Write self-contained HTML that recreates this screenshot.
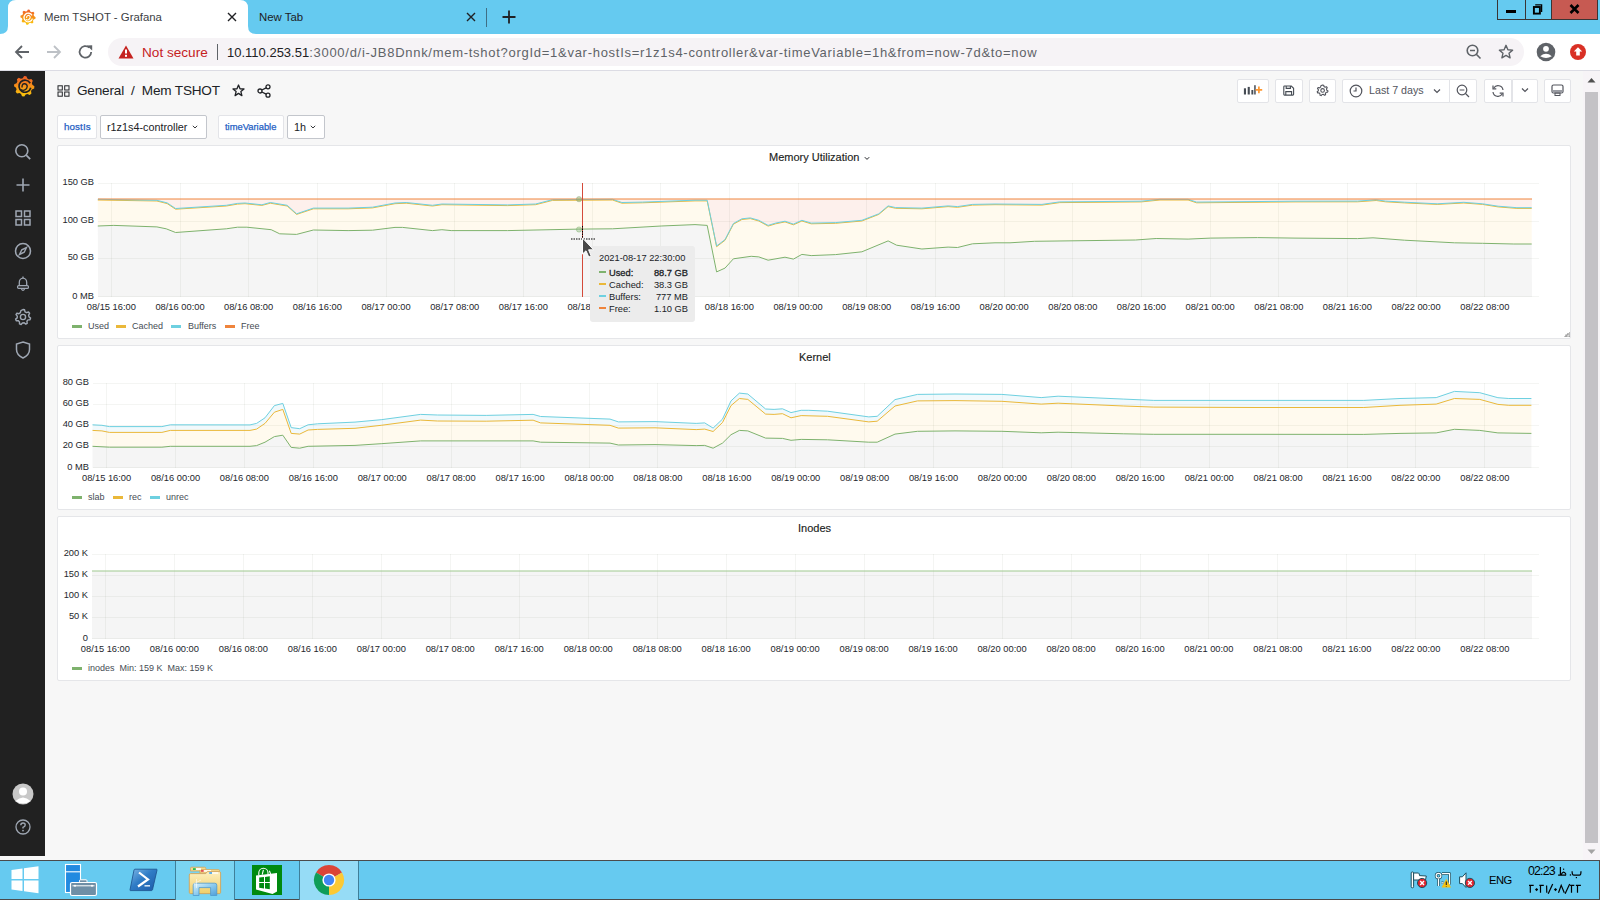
<!DOCTYPE html>
<html><head><meta charset="utf-8">
<style>
*{box-sizing:border-box;margin:0;padding:0}
html,body{width:1600px;height:900px;overflow:hidden;font-family:"Liberation Sans",sans-serif;background:#f7f7f7}
.a{position:absolute}
#tabs{left:0;top:0;width:1600px;height:34px;background:#65caf0}
#toolbar{left:0;top:34px;width:1600px;height:37px;background:#fff;border-bottom:1px solid #dcdce4}
#omni{left:108px;top:38px;width:1416px;height:28px;border-radius:14px;background:#f6f3f6}
#side{left:0;top:71px;width:45px;height:785px;background:#212121}
#main{left:45px;top:71px;width:1538px;height:789px;background:#f7f7f7}
#sbar{left:1583px;top:71px;width:17px;height:789px;background:#f7f4f7}
#thumb{left:1585px;top:92px;width:13px;height:751px;background:#c4c2c6}
#taskbar{left:0;top:860px;width:1600px;height:40px;background:#66caf0;border-top:1px solid #4b4b4b;border-bottom:1px solid #4b4b4b;border-right:1px solid #4b4b4b}
.panel{position:absolute;left:57px;width:1514px;background:#fff;border:1px solid #e5e6e9;border-radius:2px}
.ptitle{position:absolute;font-size:11px;color:#1b1d21;white-space:nowrap;-webkit-text-stroke:0.15px #1b1d21}
.btn{position:absolute;top:79px;height:24px;background:#fff;border:1px solid #e3e4e8;border-radius:2px}
.lg{position:absolute;font-size:9px;color:#464c54;white-space:nowrap}
.sw{position:absolute;width:10px;height:3px}
svg text{font-family:"Liberation Sans",sans-serif}
</style></head><body>

<!-- ============ Chrome tab strip ============ -->
<div id="tabs" class="a"></div>
<svg class="a" style="left:0;top:0" width="270" height="36">
  <path d="M0,34 Q8,34 8,26 L8,8 Q8,0 16,0 L240,0 Q248,0 248,8 L248,26 Q248,34 256,34 Z" fill="#fff"/>
</svg>
<!-- grafana favicon -->
<svg class="a" style="left:20px;top:9px" width="16" height="16" viewBox="0 0 16 16">
  <defs><linearGradient id="gf" x1="0" y1="0" x2="0" y2="1"><stop offset="0" stop-color="#f05a28"/><stop offset="1" stop-color="#fbca0a"/></linearGradient></defs>
  <path d="M6.91,2.20 L7.95,0.60 L9.61,0.77 L10.30,2.55 L11.48,3.19 L13.34,2.79 L14.39,4.09 L13.62,5.83 L14.00,7.11 L15.60,8.15 L15.43,9.81 L13.65,10.50 L13.01,11.68 L13.41,13.54 L12.11,14.59 L10.37,13.82 L9.09,14.20 L8.05,15.80 L6.39,15.63 L5.70,13.85 L4.52,13.21 L2.66,13.61 L1.61,12.31 L2.38,10.57 L2.00,9.29 L0.40,8.25 L0.57,6.59 L2.35,5.90 L2.99,4.72 L2.59,2.86 L3.89,1.81 L5.63,2.58 Z" fill="url(#gf)"/>
  <path d="M12,6.4 A4.3,4.3 0 1,0 12.4,9.6" fill="none" stroke="#fff" stroke-width="1.3"/>
  <path d="M6.8,9 A1.8,1.8 0 1,1 10.2,8.3 A2.8,2.8 0 0,1 5.8,10.4" fill="none" stroke="#fff" stroke-width="1.1"/>
</svg>
<div class="a" style="left:44px;top:11px;font-size:11.4px;color:#3c4043;white-space:nowrap">Mem TSHOT - Grafana</div>
<svg class="a" style="left:227px;top:12px" width="10" height="10"><path d="M1,1 L9,9 M9,1 L1,9" stroke="#202124" stroke-width="1.4"/></svg>
<div class="a" style="left:259px;top:11px;font-size:11.4px;color:#202124;white-space:nowrap">New Tab</div>
<svg class="a" style="left:466px;top:12px" width="10" height="10"><path d="M1,1 L9,9 M9,1 L1,9" stroke="#202124" stroke-width="1.4"/></svg>
<div class="a" style="left:486px;top:8px;width:1px;height:19px;background:#3f6f85"></div>
<svg class="a" style="left:502px;top:10px" width="14" height="14"><path d="M7,0.5 V13.5 M0.5,7 H13.5" stroke="#202124" stroke-width="1.8"/></svg>
<!-- window controls -->
<div class="a" style="left:1497px;top:0;width:101px;height:20px;border:1px solid #3a3434;border-top:none;background:#65caf0"></div>
<div class="a" style="left:1525px;top:0;width:1px;height:20px;background:#3a3434"></div>
<div class="a" style="left:1551px;top:0;width:46px;height:19px;background:#c75a52;border-left:1px solid #3a3434"></div>
<div class="a" style="left:1506px;top:10px;width:10px;height:3px;background:#000"></div>
<svg class="a" style="left:1532px;top:3px" width="12" height="12" viewBox="0 0 12 12"><path d="M3.2,1.8 H9.6 V9" fill="none" stroke="#000" stroke-width="1.3"/><rect x="1.9" y="4" width="6" height="6.6" fill="none" stroke="#000" stroke-width="1.9"/></svg>
<svg class="a" style="left:1569px;top:4px" width="11" height="10" viewBox="0 0 11 10"><path d="M1.5,1 L9.5,9 M9.5,1 L1.5,9" stroke="#000" stroke-width="2.6"/></svg>

<!-- ============ Chrome toolbar ============ -->
<div id="toolbar" class="a"></div>
<svg class="a" style="left:12px;top:44px" width="20" height="16" viewBox="0 0 20 16"><path d="M17,8 H4 M10,2 L4,8 L10,14" fill="none" stroke="#5f6368" stroke-width="1.8"/></svg>
<svg class="a" style="left:44px;top:44px" width="20" height="16" viewBox="0 0 20 16"><path d="M3,8 H16 M10,2 L16,8 L10,14" fill="none" stroke="#bdc1c6" stroke-width="1.8"/></svg>
<svg class="a" style="left:77px;top:43px" width="18" height="18" viewBox="0 0 18 18"><path d="M14.2,9 A5.8,5.8 0 1,1 12.3,4.6" fill="none" stroke="#5f6368" stroke-width="1.8"/><path d="M9.8,2.4 L15.2,2.2 L15.2,7.4 Z" fill="#5f6368"/></svg>
<div id="omni" class="a"></div>
<svg class="a" style="left:118px;top:45px" width="16" height="14" viewBox="0 0 16 14"><path d="M8,0.5 L15.5,13.5 H0.5 Z" fill="#c5221f"/><rect x="7" y="4.5" width="2" height="4" fill="#fff"/><rect x="7" y="9.8" width="2" height="2" fill="#fff"/></svg>
<div class="a" style="left:142px;top:45px;font-size:13.6px;color:#c5221f;white-space:nowrap">Not secure</div>
<div class="a" style="left:217px;top:44px;width:1px;height:16px;background:#5f6368"></div>
<div class="a" style="left:227px;top:45px;font-size:13px;color:#5f6368;white-space:nowrap"><span style="color:#202124">10.110.253.51</span><span style="letter-spacing:0.72px">:3000/d/i-JB8Dnnk/mem-tshot?orgId=1&amp;var-hostIs=r1z1s4-controller&amp;var-timeVariable=1h&amp;from=now-7d&amp;to=now</span></div>
<svg class="a" style="left:1465px;top:43px" width="17" height="17" viewBox="0 0 17 17"><circle cx="7.5" cy="7.5" r="5.3" fill="none" stroke="#5f6368" stroke-width="1.6"/><path d="M5,7.5 H10 M11.3,11.3 L15.5,15.5" stroke="#5f6368" stroke-width="1.6"/></svg>
<svg class="a" style="left:1498px;top:44px" width="16" height="16" viewBox="0 0 16 16"><path d="M8,1.3 L9.9,5.7 L14.6,6.1 L11,9.2 L12.1,13.8 L8,11.4 L3.9,13.8 L5,9.2 L1.4,6.1 L6.1,5.7 Z" fill="none" stroke="#5f6368" stroke-width="1.4" stroke-linejoin="round"/></svg>
<svg class="a" style="left:1536px;top:42px" width="20" height="20" viewBox="0 0 20 20"><circle cx="10" cy="10" r="9.3" fill="#5f6368"/><circle cx="10" cy="6.8" r="2.9" fill="#fff"/><path d="M4.2,14.2 Q10,9.5 15.8,14.2 Q10,17.8 4.2,14.2 Z" fill="#fff"/></svg>
<svg class="a" style="left:1570px;top:44px" width="16" height="16" viewBox="0 0 16 16"><circle cx="8" cy="8" r="8" fill="#d93025"/><path d="M8,3.2 L12.2,7.6 H9.8 V11.6 H6.2 V7.6 H3.8 Z" fill="#fff"/></svg>

<!-- ============ Grafana ============ -->
<div id="main" class="a"></div>
<div id="side" class="a"></div>
<!-- grafana logo -->
<svg class="a" style="left:11px;top:73px" width="24" height="25" viewBox="0 0 24 25">
  <defs><linearGradient id="gl" x1="0" y1="0" x2="0" y2="1"><stop offset="0" stop-color="#f05a28"/><stop offset="1" stop-color="#fbca0a"/></linearGradient></defs>
  <path d="M11.72,5.13 L13.13,3.10 L15.36,3.33 L16.33,5.61 L17.93,6.48 L20.37,6.04 L21.78,7.78 L20.85,10.07 L21.37,11.82 L23.40,13.23 L23.17,15.46 L20.89,16.43 L20.02,18.03 L20.46,20.47 L18.72,21.88 L16.43,20.95 L14.68,21.47 L13.27,23.50 L11.04,23.27 L10.07,20.99 L8.47,20.12 L6.03,20.56 L4.62,18.82 L5.55,16.53 L5.03,14.78 L3.00,13.37 L3.23,11.14 L5.51,10.17 L6.38,8.57 L5.94,6.13 L7.68,4.72 L9.97,5.65 Z" fill="url(#gl)"/>
  <path d="M19.2,10.2 A6,6 0 1,0 19.8,14.8" fill="none" stroke="#212121" stroke-width="1.7"/>
  <path d="M11.3,14.5 A2.6,2.6 0 1,1 16.2,13.5 A4,4 0 0,1 9.8,16.5" fill="none" stroke="#212121" stroke-width="1.4"/>
</svg>
<!-- side icons -->
<svg class="a" style="left:14px;top:143px" width="18" height="18" viewBox="0 0 18 18"><circle cx="7.8" cy="7.8" r="6" fill="none" stroke="#9fa7b3" stroke-width="1.6"/><path d="M12.2,12.2 L16.2,16.2" stroke="#9fa7b3" stroke-width="1.8"/></svg>
<svg class="a" style="left:16px;top:178px" width="14" height="14" viewBox="0 0 14 14"><path d="M7,0.5 V13.5 M0.5,7 H13.5" stroke="#9fa7b3" stroke-width="1.6"/></svg>
<svg class="a" style="left:15px;top:210px" width="16" height="16" viewBox="0 0 16 16"><g fill="none" stroke="#9fa7b3" stroke-width="1.5"><rect x="1" y="1" width="5.5" height="5.5"/><rect x="9.5" y="1" width="5.5" height="5.5"/><rect x="1" y="9.5" width="5.5" height="5.5"/><rect x="9.5" y="9.5" width="5.5" height="5.5"/></g></svg>
<svg class="a" style="left:14px;top:242px" width="18" height="18" viewBox="0 0 18 18"><circle cx="9" cy="9" r="7.5" fill="none" stroke="#9fa7b3" stroke-width="1.5"/><path d="M12.5,5.5 L10.2,10.2 L5.5,12.5 L7.8,7.8 Z" fill="none" stroke="#9fa7b3" stroke-width="1.4"/></svg>
<svg class="a" style="left:15px;top:275px" width="16" height="18" viewBox="0 0 16 18"><path d="M4.3,10.4 V7.6 A3.7,4.4 0 0,1 11.7,7.6 V10.4" fill="none" stroke="#9fa7b3" stroke-width="1.3"/><rect x="2.6" y="10.6" width="10.8" height="2.8" rx="1" fill="none" stroke="#9fa7b3" stroke-width="1.2"/><path d="M6.4,14.2 Q8,16.4 9.6,14.2" fill="none" stroke="#9fa7b3" stroke-width="1.2"/><path d="M8,1.6 V3.3" stroke="#9fa7b3" stroke-width="1.3"/></svg>
<svg class="a" style="left:14px;top:308px" width="18" height="18" viewBox="0 0 18 18"><path d="M9,1.5 L10.6,1.8 L11,3.8 L12.6,4.7 L14.5,4 L15.6,5.3 L14.6,7.1 L15,8.9 L16.6,10.1 L16,11.7 L14,11.9 L12.9,13.3 L13.2,15.3 L11.7,16.1 L10.2,14.8 L8.4,15 L7.1,16.5 L5.5,15.9 L5.5,13.9 L4.2,12.6 L2.2,12.7 L1.6,11.1 L3.2,9.9 L3.3,8.1 L2,6.6 L2.9,5.2 L4.9,5.7 L6.4,4.6 L6.9,2.6 Z" fill="none" stroke="#9fa7b3" stroke-width="1.4" stroke-linejoin="round"/><circle cx="9" cy="9" r="2.6" fill="none" stroke="#9fa7b3" stroke-width="1.4"/></svg>
<svg class="a" style="left:15px;top:341px" width="16" height="18" viewBox="0 0 16 18"><path d="M8,1 L14.5,3 V8.5 Q14.5,14 8,17 Q1.5,14 1.5,8.5 V3 Z" fill="none" stroke="#9fa7b3" stroke-width="1.5"/></svg>
<svg class="a" style="left:12px;top:783px" width="22" height="22" viewBox="0 0 22 22"><circle cx="11" cy="11" r="10.5" fill="#c8c8c8"/><circle cx="11" cy="8.5" r="4" fill="#fff"/><path d="M3.5,18 Q11,11 18.5,18 Q11,23 3.5,18 Z" fill="#fff"/></svg>
<svg class="a" style="left:15px;top:819px" width="16" height="16" viewBox="0 0 16 16"><circle cx="8" cy="8" r="7" fill="none" stroke="#9fa7b3" stroke-width="1.3"/><path d="M5.8,6.2 Q5.8,4 8,4 Q10.2,4 10.2,6 Q10.2,7.4 8,8.3 V9.6" fill="none" stroke="#9fa7b3" stroke-width="1.4"/><circle cx="8" cy="11.6" r="0.9" fill="#9fa7b3"/></svg>

<!-- header -->
<svg class="a" style="left:57px;top:85px" width="13" height="12" viewBox="0 0 13 12"><g fill="none" stroke="#202226" stroke-width="1"><rect x="1" y="0.8" width="4.3" height="4.2"/><rect x="7.7" y="0.8" width="4.3" height="4.2"/><rect x="1" y="7" width="4.3" height="4.2"/><rect x="7.7" y="7" width="4.3" height="4.2"/></g></svg>
<div class="a" style="left:77px;top:83px;font-size:13.6px;color:#202226;white-space:nowrap;letter-spacing:-0.2px">General&nbsp;&nbsp;/&nbsp;&nbsp;Mem TSHOT</div>
<svg class="a" style="left:232px;top:84px" width="13" height="13" viewBox="0 0 13 13"><path d="M6.5,1 L8,4.8 L12,5 L8.9,7.6 L9.9,11.6 L6.5,9.4 L3.1,11.6 L4.1,7.6 L1,5 L5,4.8 Z" fill="none" stroke="#202226" stroke-width="1.3" stroke-linejoin="round"/></svg>
<svg class="a" style="left:257px;top:84px" width="14" height="14" viewBox="0 0 14 14"><g fill="none" stroke="#202226" stroke-width="1.3"><circle cx="3" cy="7" r="2"/><circle cx="11" cy="2.8" r="2"/><circle cx="11" cy="11.2" r="2"/><path d="M4.8,6 L9.2,3.8 M4.8,8 L9.2,10.2"/></g></svg>

<!-- right toolbar buttons -->
<div class="btn" style="left:1237px;width:32px"></div>
<svg class="a" style="left:1243px;top:84px" width="20" height="12" viewBox="0 0 20 12"><g fill="#464c54"><rect x="0.9" y="4.3" width="2.1" height="6.2"/><rect x="4.7" y="2.9" width="2.1" height="7.6"/><rect x="8.4" y="6" width="1.9" height="4.5"/><rect x="11.2" y="1.2" width="1.5" height="9.3"/></g><path d="M15.9,2.6 V9.2 M12.6,5.9 H19.2" stroke="#ff9830" stroke-width="1.7"/></svg>
<div class="btn" style="left:1275px;width:28px"></div>
<svg class="a" style="left:1283px;top:85px" width="12" height="11" viewBox="0 0 12 11"><path d="M1.5,1 H8.3 L10.6,3.3 V9.3 Q10.6,10.1 9.8,10.1 H1.5 Q0.8,10.1 0.8,9.3 V1.8 Q0.8,1 1.5,1 Z" fill="none" stroke="#464c54" stroke-width="1.1"/><path d="M3.2,1 V3.4 H7.4 V1 M2.8,10.1 V6.6 H8.6 V10.1" fill="none" stroke="#464c54" stroke-width="1.1"/></svg>
<div class="btn" style="left:1309px;width:27px"></div>
<svg class="a" style="left:1316px;top:84px" width="13" height="13" viewBox="0 0 13 13"><path d="M6.5,1 L7.7,1.2 L8,2.6 L9.1,3.2 L10.4,2.7 L11.2,3.7 L10.5,4.9 L10.8,6.2 L12,7 L11.6,8.2 L10.2,8.3 L9.4,9.3 L9.6,10.7 L8.5,11.3 L7.4,10.4 L6.1,10.5 L5.2,11.6 L4,11.2 L4,9.8 L3.1,8.9 L1.7,9 L1.2,7.8 L2.3,6.9 L2.4,5.6 L1.5,4.6 L2.1,3.5 L3.5,3.9 L4.6,3.1 L4.9,1.7 Z" fill="none" stroke="#52545c" stroke-width="1.1" stroke-linejoin="round"/><circle cx="6.6" cy="6.4" r="1.8" fill="none" stroke="#52545c" stroke-width="1.1"/></svg>
<div class="btn" style="left:1342px;width:108px;border-radius:2px 0 0 2px"></div>
<div class="btn" style="left:1449px;width:28px;border-radius:0 2px 2px 0"></div>
<svg class="a" style="left:1349px;top:84px" width="14" height="14" viewBox="0 0 14 14"><circle cx="7" cy="7" r="5.8" fill="none" stroke="#52545c" stroke-width="1.2"/><path d="M7,3.5 V7 H4.5" fill="none" stroke="#52545c" stroke-width="1.2"/></svg>
<div class="a" style="left:1369px;top:84px;font-size:10.7px;color:#52545c;white-space:nowrap">Last 7 days</div>
<svg class="a" style="left:1433px;top:88px" width="8" height="6" viewBox="0 0 8 6"><path d="M1,1.5 L4,4.5 L7,1.5" fill="none" stroke="#52545c" stroke-width="1.2"/></svg>
<svg class="a" style="left:1456px;top:84px" width="14" height="14" viewBox="0 0 14 14"><circle cx="6" cy="6" r="4.8" fill="none" stroke="#52545c" stroke-width="1.2"/><path d="M3.6,6 H8.4 M9.5,9.5 L13,13" stroke="#52545c" stroke-width="1.2"/></svg>
<div class="btn" style="left:1484px;width:28px;border-radius:2px 0 0 2px"></div>
<div class="btn" style="left:1512px;width:26px;border-radius:0 2px 2px 0"></div>
<svg class="a" style="left:1491px;top:84px" width="14" height="14" viewBox="0 0 14 14"><path d="M12,6 A5,5 0 0,0 2.8,4 M2,8 A5,5 0 0,0 11.2,10" fill="none" stroke="#52545c" stroke-width="1.2"/><path d="M2,1.5 V4.8 H5.3 M12,12.5 V9.2 H8.7" fill="none" stroke="#52545c" stroke-width="1.2"/></svg>
<svg class="a" style="left:1521px;top:87px" width="8" height="6" viewBox="0 0 8 6"><path d="M1,1.5 L4,4.5 L7,1.5" fill="none" stroke="#52545c" stroke-width="1.2"/></svg>
<div class="btn" style="left:1544px;width:27px"></div>
<svg class="a" style="left:1551px;top:84px" width="13" height="13" viewBox="0 0 13 13"><rect x="1" y="1" width="11" height="8" rx="1.5" fill="none" stroke="#52545c" stroke-width="1.2"/><rect x="1.6" y="6" width="9.8" height="2.4" fill="#9a9ca3"/><rect x="4" y="9" width="5" height="2.5" fill="none" stroke="#52545c" stroke-width="1"/></svg>

<!-- variables -->
<div class="a" style="left:57px;top:115px;width:40px;height:24px;background:#fff;border:1px solid #e3e4e8;border-radius:2px"></div>
<div class="a" style="left:64px;top:121px;font-size:9.8px;color:#1f60c4;white-space:nowrap;-webkit-text-stroke:0.25px #1f60c4;letter-spacing:0.1px">hostIs</div>
<div class="a" style="left:100px;top:115px;width:107px;height:24px;background:#fff;border:1px solid #c3c6cc;border-radius:2px"></div>
<div class="a" style="left:107px;top:121px;font-size:10.8px;color:#202226;white-space:nowrap">r1z1s4-controller</div>
<svg class="a" style="left:192px;top:125px" width="6" height="4" viewBox="0 0 6 4"><path d="M0.8,0.8 L3,3 L5.2,0.8" fill="none" stroke="#202226" stroke-width="0.9"/></svg>
<div class="a" style="left:218px;top:115px;width:66px;height:24px;background:#fff;border:1px solid #e3e4e8;border-radius:2px"></div>
<div class="a" style="left:225px;top:121px;font-size:9.4px;color:#1f60c4;white-space:nowrap;-webkit-text-stroke:0.25px #1f60c4">timeVariable</div>
<div class="a" style="left:287px;top:115px;width:38px;height:24px;background:#fff;border:1px solid #c3c6cc;border-radius:2px"></div>
<div class="a" style="left:294px;top:121px;font-size:10.8px;color:#202226;white-space:nowrap">1h</div>
<svg class="a" style="left:310px;top:125px" width="6" height="4" viewBox="0 0 6 4"><path d="M0.8,0.8 L3,3 L5.2,0.8" fill="none" stroke="#202226" stroke-width="0.9"/></svg>

<!-- panels -->
<div class="panel" style="top:145px;height:194px"></div>
<div class="panel" style="top:345px;height:165px"></div>
<div class="panel" style="top:516px;height:165px"></div>
<svg class="a" style="left:1564px;top:332px" width="6" height="5"><path d="M0,5 H6 V0 M2,5 V3 H4 V1" fill="none" stroke="#8e8e8e" stroke-width="1.2"/></svg>
<div class="ptitle" style="left:769px;top:151px">Memory Utilization</div>
<svg class="a" style="left:864px;top:156px" width="6" height="5" viewBox="0 0 6 5"><path d="M0.8,1.2 L3,3.4 L5.2,1.2" fill="none" stroke="#202226" stroke-width="1"/></svg>
<div class="ptitle" style="left:799px;top:351px">Kernel</div>
<div class="ptitle" style="left:798px;top:522px">Inodes</div>

<svg class="a" style="left:0;top:0" width="1600" height="900">

<polygon fill="#f5f5f5" points="97.8,226.0 113.8,225.4 156.9,226.9 166.2,228.8 175.6,232.5 226.3,228.8 237.5,227.2 246.9,227.2 271.2,229.7 279.7,233.8 296.6,234.4 313.4,230.0 348.1,230.6 372.5,230.2 395.0,227.4 402.5,227.4 432.5,230.6 441.9,229.7 451.2,230.6 507.5,230.6 578.8,229.1 612.5,228.8 661.2,226.0 695.0,224.6 707.2,225.4 716.6,271.9 725.0,268.1 733.4,258.8 751.2,256.3 758.8,256.9 768.1,260.2 785.0,257.2 793.4,259.1 801.9,254.4 811.2,255.6 835.6,254.6 861.9,251.8 888.1,240.9 896.6,245.2 921.9,249.0 948.1,247.1 957.5,247.5 972.5,243.8 995.0,242.8 1010.0,242.8 1034.4,241.3 1135.6,240.0 1156.2,238.5 1188.1,239.1 1210.6,238.1 1257.5,237.6 1295.0,238.1 1357.5,238.6 1373.0,237.8 1404.4,240.2 1454.4,242.8 1482.5,243.3 1513.8,244.0 1531.7,244.0 1532.0,297.0 98.0,297.0"/>
<polygon fill="#fffaee" points="97.8,199.3 156.9,200.3 167.2,202.9 175.6,208.5 226.3,205.3 237.5,203.4 245.0,203.0 261.9,204.8 270.3,202.5 287.2,205.3 296.6,213.8 313.4,208.1 348.1,208.1 372.5,207.2 395.0,203.0 406.2,202.5 432.5,205.3 441.9,204.0 507.5,204.9 535.6,204.0 552.5,199.7 612.5,199.3 621.9,202.5 642.5,202.1 695.0,200.2 707.2,200.2 716.6,246.0 725.0,239.6 733.4,223.5 741.9,218.8 750.3,217.9 758.8,220.3 768.1,225.4 775.6,223.1 785.0,221.2 793.4,224.1 801.9,220.3 811.2,223.1 835.6,222.6 861.9,220.3 878.8,213.8 888.1,205.9 895.6,207.6 921.9,208.1 948.1,205.9 957.5,206.6 972.5,204.4 995.0,204.0 1041.9,204.4 1059.7,201.9 1141.2,201.2 1160.0,199.3 1188.1,199.3 1196.6,202.1 1295.0,201.2 1357.5,201.1 1376.2,199.8 1385.6,201.1 1404.4,202.2 1437.2,203.8 1463.8,202.3 1482.5,203.8 1498.1,206.2 1516.9,207.7 1531.7,207.7 1531.7,244.0 1513.8,244.0 1482.5,243.3 1454.4,242.8 1404.4,240.2 1373.0,237.8 1357.5,238.6 1295.0,238.1 1257.5,237.6 1210.6,238.1 1188.1,239.1 1156.2,238.5 1135.6,240.0 1034.4,241.3 1010.0,242.8 995.0,242.8 972.5,243.8 957.5,247.5 948.1,247.1 921.9,249.0 896.6,245.2 888.1,240.9 861.9,251.8 835.6,254.6 811.2,255.6 801.9,254.4 793.4,259.1 785.0,257.2 768.1,260.2 758.8,256.9 751.2,256.3 733.4,258.8 725.0,268.1 716.6,271.9 707.2,225.4 695.0,224.6 661.2,226.0 612.5,228.8 578.8,229.1 507.5,230.6 451.2,230.6 441.9,229.7 432.5,230.6 402.5,227.4 395.0,227.4 372.5,230.2 348.1,230.6 313.4,230.0 296.6,234.4 279.7,233.8 271.2,229.7 246.9,227.2 237.5,227.2 226.3,228.8 175.6,232.5 166.2,228.8 156.9,226.9 113.8,225.4 97.8,226.0"/>
<polygon fill="#fdf0ec" points="98.0,199.0 1532.0,199.0 1531.7,207.7 1516.9,207.7 1498.1,206.2 1482.5,203.8 1463.8,202.3 1437.2,203.8 1404.4,202.2 1385.6,201.1 1376.2,199.8 1357.5,201.1 1295.0,201.2 1196.6,202.1 1188.1,199.3 1160.0,199.3 1141.2,201.2 1059.7,201.9 1041.9,204.4 995.0,204.0 972.5,204.4 957.5,206.6 948.1,205.9 921.9,208.1 895.6,207.6 888.1,205.9 878.8,213.8 861.9,220.3 835.6,222.6 811.2,223.1 801.9,220.3 793.4,224.1 785.0,221.2 775.6,223.1 768.1,225.4 758.8,220.3 750.3,217.9 741.9,218.8 733.4,223.5 725.0,239.6 716.6,246.0 707.2,200.2 695.0,200.2 642.5,202.1 621.9,202.5 612.5,199.3 552.5,199.7 535.6,204.0 507.5,204.9 441.9,204.0 432.5,205.3 406.2,202.5 395.0,203.0 372.5,207.2 348.1,208.1 313.4,208.1 296.6,213.8 287.2,205.3 270.3,202.5 261.9,204.8 245.0,203.0 237.5,203.4 226.3,205.3 175.6,208.5 167.2,202.9 156.9,200.3 97.8,199.3"/>
<g stroke="rgba(40,50,20,0.05)" stroke-width="1" shape-rendering="crispEdges">
<line x1="111.3" y1="183" x2="111.3" y2="297"/>
<line x1="180.0" y1="183" x2="180.0" y2="297"/>
<line x1="248.6" y1="183" x2="248.6" y2="297"/>
<line x1="317.3" y1="183" x2="317.3" y2="297"/>
<line x1="386.0" y1="183" x2="386.0" y2="297"/>
<line x1="454.7" y1="183" x2="454.7" y2="297"/>
<line x1="523.3" y1="183" x2="523.3" y2="297"/>
<line x1="592.0" y1="183" x2="592.0" y2="297"/>
<line x1="660.7" y1="183" x2="660.7" y2="297"/>
<line x1="729.4" y1="183" x2="729.4" y2="297"/>
<line x1="798.0" y1="183" x2="798.0" y2="297"/>
<line x1="866.7" y1="183" x2="866.7" y2="297"/>
<line x1="935.4" y1="183" x2="935.4" y2="297"/>
<line x1="1004.1" y1="183" x2="1004.1" y2="297"/>
<line x1="1072.8" y1="183" x2="1072.8" y2="297"/>
<line x1="1141.4" y1="183" x2="1141.4" y2="297"/>
<line x1="1210.1" y1="183" x2="1210.1" y2="297"/>
<line x1="1278.8" y1="183" x2="1278.8" y2="297"/>
<line x1="1347.4" y1="183" x2="1347.4" y2="297"/>
<line x1="1416.1" y1="183" x2="1416.1" y2="297"/>
<line x1="1484.8" y1="183" x2="1484.8" y2="297"/>
<line x1="98" y1="183.5" x2="1539" y2="183.5"/>
<line x1="98" y1="221.5" x2="1539" y2="221.5"/>
<line x1="98" y1="258.5" x2="1539" y2="258.5"/>
<line x1="98" y1="296.5" x2="1539" y2="296.5"/>
</g>
<polyline fill="none" stroke="#7eb26d" stroke-width="1" points="97.8,226.0 113.8,225.4 156.9,226.9 166.2,228.8 175.6,232.5 226.3,228.8 237.5,227.2 246.9,227.2 271.2,229.7 279.7,233.8 296.6,234.4 313.4,230.0 348.1,230.6 372.5,230.2 395.0,227.4 402.5,227.4 432.5,230.6 441.9,229.7 451.2,230.6 507.5,230.6 578.8,229.1 612.5,228.8 661.2,226.0 695.0,224.6 707.2,225.4 716.6,271.9 725.0,268.1 733.4,258.8 751.2,256.3 758.8,256.9 768.1,260.2 785.0,257.2 793.4,259.1 801.9,254.4 811.2,255.6 835.6,254.6 861.9,251.8 888.1,240.9 896.6,245.2 921.9,249.0 948.1,247.1 957.5,247.5 972.5,243.8 995.0,242.8 1010.0,242.8 1034.4,241.3 1135.6,240.0 1156.2,238.5 1188.1,239.1 1210.6,238.1 1257.5,237.6 1295.0,238.1 1357.5,238.6 1373.0,237.8 1404.4,240.2 1454.4,242.8 1482.5,243.3 1513.8,244.0 1531.7,244.0"/>
<polyline fill="none" stroke="#eab839" stroke-width="1" points="97.8,200.0 156.9,201.0 167.2,203.6 175.6,209.2 226.3,206.0 237.5,204.1 245.0,203.7 261.9,205.4 270.3,203.2 287.2,206.0 296.6,214.4 313.4,208.8 348.1,208.8 372.5,207.9 395.0,203.7 406.2,203.2 432.5,206.0 441.9,204.7 507.5,205.6 535.6,204.7 552.5,200.4 612.5,200.0 621.9,203.2 642.5,202.8 695.0,200.9 707.2,200.9 716.6,246.7 725.0,240.3 733.4,224.2 741.9,219.5 750.3,218.6 758.8,221.0 768.1,226.1 775.6,223.8 785.0,221.9 793.4,224.8 801.9,221.0 811.2,223.8 835.6,223.3 861.9,221.0 878.8,214.4 888.1,206.6 895.6,208.3 921.9,208.8 948.1,206.6 957.5,207.3 972.5,205.1 995.0,204.7 1041.9,205.1 1059.7,202.6 1141.2,201.9 1160.0,200.0 1188.1,200.0 1196.6,202.8 1295.0,201.9 1357.5,201.8 1376.2,200.5 1385.6,201.8 1404.4,202.9 1437.2,204.4 1463.8,203.0 1482.5,204.4 1498.1,206.9 1516.9,208.4 1531.7,208.4"/>
<polyline fill="none" stroke="#6ed0e0" stroke-width="1" points="97.8,199.3 156.9,200.3 167.2,202.9 175.6,208.5 226.3,205.3 237.5,203.4 245.0,203.0 261.9,204.8 270.3,202.5 287.2,205.3 296.6,213.8 313.4,208.1 348.1,208.1 372.5,207.2 395.0,203.0 406.2,202.5 432.5,205.3 441.9,204.0 507.5,204.9 535.6,204.0 552.5,199.7 612.5,199.3 621.9,202.5 642.5,202.1 695.0,200.2 707.2,200.2 716.6,246.0 725.0,239.6 733.4,223.5 741.9,218.8 750.3,217.9 758.8,220.3 768.1,225.4 775.6,223.1 785.0,221.2 793.4,224.1 801.9,220.3 811.2,223.1 835.6,222.6 861.9,220.3 878.8,213.8 888.1,205.9 895.6,207.6 921.9,208.1 948.1,205.9 957.5,206.6 972.5,204.4 995.0,204.0 1041.9,204.4 1059.7,201.9 1141.2,201.2 1160.0,199.3 1188.1,199.3 1196.6,202.1 1295.0,201.2 1357.5,201.1 1376.2,199.8 1385.6,201.1 1404.4,202.2 1437.2,203.8 1463.8,202.3 1482.5,203.8 1498.1,206.2 1516.9,207.7 1531.7,207.7"/>
<polyline fill="none" stroke="#ef843c" stroke-width="1" points="98.0,199.0 1532.0,199.0"/>
<g fill="#24262b" font-size="9.3">
<text x="94" y="184.8" text-anchor="end">150 GB</text>
<text x="94" y="222.5" text-anchor="end">100 GB</text>
<text x="94" y="260.3" text-anchor="end">50 GB</text>
<text x="94" y="298.8" text-anchor="end">0 MB</text>
<text x="111.3" y="309.5" text-anchor="middle">08/15 16:00</text>
<text x="180.0" y="309.5" text-anchor="middle">08/16 00:00</text>
<text x="248.6" y="309.5" text-anchor="middle">08/16 08:00</text>
<text x="317.3" y="309.5" text-anchor="middle">08/16 16:00</text>
<text x="386.0" y="309.5" text-anchor="middle">08/17 00:00</text>
<text x="454.7" y="309.5" text-anchor="middle">08/17 08:00</text>
<text x="523.3" y="309.5" text-anchor="middle">08/17 16:00</text>
<text x="592.0" y="309.5" text-anchor="middle">08/18 00:00</text>
<text x="660.7" y="309.5" text-anchor="middle">08/18 08:00</text>
<text x="729.4" y="309.5" text-anchor="middle">08/18 16:00</text>
<text x="798.0" y="309.5" text-anchor="middle">08/19 00:00</text>
<text x="866.7" y="309.5" text-anchor="middle">08/19 08:00</text>
<text x="935.4" y="309.5" text-anchor="middle">08/19 16:00</text>
<text x="1004.1" y="309.5" text-anchor="middle">08/20 00:00</text>
<text x="1072.8" y="309.5" text-anchor="middle">08/20 08:00</text>
<text x="1141.4" y="309.5" text-anchor="middle">08/20 16:00</text>
<text x="1210.1" y="309.5" text-anchor="middle">08/21 00:00</text>
<text x="1278.8" y="309.5" text-anchor="middle">08/21 08:00</text>
<text x="1347.4" y="309.5" text-anchor="middle">08/21 16:00</text>
<text x="1416.1" y="309.5" text-anchor="middle">08/22 00:00</text>
<text x="1484.8" y="309.5" text-anchor="middle">08/22 08:00</text>
</g>


<polygon fill="#f5f5f5" points="92.5,446.3 109.4,447.2 161.9,447.2 170.3,446.3 250.0,446.3 256.6,445.6 265.0,442.2 274.4,436.6 282.8,435.2 291.2,447.4 299.7,448.2 308.1,446.3 355.0,445.4 381.2,443.7 420.6,440.9 533.1,440.9 540.6,442.2 610.0,443.1 618.4,445.0 655.0,444.6 696.2,445.6 704.7,445.4 713.1,448.2 722.5,443.1 731.0,434.7 739.4,430.4 747.8,430.9 765.6,438.1 782.5,438.4 791.0,440.3 801.2,439.4 827.5,439.8 868.8,442.2 877.2,442.2 895.0,434.1 917.5,431.3 955.0,430.9 1001.9,431.3 1041.2,432.8 1058.1,432.2 1123.8,433.8 1153.8,434.3 1255.0,434.3 1363.8,434.4 1400.0,433.4 1436.2,432.9 1454.4,429.3 1479.8,430.4 1497.9,432.9 1531.4,433.4 1531.4,468.0 92.5,468.0"/>
<polygon fill="#fffaee" points="92.5,430.4 101.9,430.9 109.4,432.4 161.9,432.4 170.3,430.4 250.0,430.4 256.6,429.1 265.0,423.4 274.4,412.2 282.8,409.4 291.2,433.4 299.7,434.1 308.1,430.0 317.5,429.4 355.0,428.3 381.2,425.3 420.6,420.1 437.5,421.0 486.2,421.2 533.1,420.2 540.6,422.9 610.0,425.3 618.4,428.1 655.0,427.8 696.2,429.6 704.7,429.1 713.1,431.5 722.5,422.5 731.0,405.6 739.4,398.5 747.8,399.4 765.6,414.1 774.1,414.4 782.5,413.7 791.0,417.8 801.2,415.6 827.5,416.3 868.8,421.9 877.2,421.2 895.0,406.0 917.5,400.9 955.0,400.6 1001.9,401.3 1041.2,404.1 1058.1,403.2 1123.8,406.0 1153.8,407.1 1255.0,407.5 1363.8,407.5 1400.0,405.3 1436.2,404.1 1454.4,398.5 1479.8,399.4 1497.9,404.4 1508.8,405.3 1531.4,405.3 1531.4,433.4 1497.9,432.9 1479.8,430.4 1454.4,429.3 1436.2,432.9 1400.0,433.4 1363.8,434.4 1255.0,434.3 1153.8,434.3 1123.8,433.8 1058.1,432.2 1041.2,432.8 1001.9,431.3 955.0,430.9 917.5,431.3 895.0,434.1 877.2,442.2 868.8,442.2 827.5,439.8 801.2,439.4 791.0,440.3 782.5,438.4 765.6,438.1 747.8,430.9 739.4,430.4 731.0,434.7 722.5,443.1 713.1,448.2 704.7,445.4 696.2,445.6 655.0,444.6 618.4,445.0 610.0,443.1 540.6,442.2 533.1,440.9 420.6,440.9 381.2,443.7 355.0,445.4 308.1,446.3 299.7,448.2 291.2,447.4 282.8,435.2 274.4,436.6 265.0,442.2 256.6,445.6 250.0,446.3 170.3,446.3 161.9,447.2 109.4,447.2 92.5,446.3"/>
<polygon fill="#f1f9fc" points="92.5,424.8 101.9,425.3 109.4,426.6 161.9,426.6 170.3,424.8 250.0,424.9 256.6,423.4 265.0,417.8 274.4,405.6 282.8,403.4 291.2,427.6 299.7,428.7 308.1,424.8 317.5,423.8 355.0,422.1 381.2,419.7 420.6,414.4 437.5,415.0 486.2,415.4 533.1,414.4 540.6,416.5 610.0,419.1 618.4,421.9 655.0,421.6 696.2,423.4 704.7,422.9 713.1,428.1 722.5,419.1 731.0,400.9 739.4,393.1 747.8,394.0 765.6,409.0 774.1,409.4 782.5,408.8 791.0,412.6 801.2,410.3 808.8,410.3 827.5,411.2 868.8,416.9 877.2,416.3 895.0,399.6 917.5,394.4 955.0,394.0 1001.9,394.4 1041.2,397.6 1058.1,396.2 1123.8,399.1 1153.8,400.4 1255.0,400.4 1363.8,400.4 1400.0,398.5 1436.2,397.6 1454.4,391.4 1479.8,392.7 1497.9,397.7 1508.8,398.5 1531.4,398.5 1531.4,405.3 1508.8,405.3 1497.9,404.4 1479.8,399.4 1454.4,398.5 1436.2,404.1 1400.0,405.3 1363.8,407.5 1255.0,407.5 1153.8,407.1 1123.8,406.0 1058.1,403.2 1041.2,404.1 1001.9,401.3 955.0,400.6 917.5,400.9 895.0,406.0 877.2,421.2 868.8,421.9 827.5,416.3 801.2,415.6 791.0,417.8 782.5,413.7 774.1,414.4 765.6,414.1 747.8,399.4 739.4,398.5 731.0,405.6 722.5,422.5 713.1,431.5 704.7,429.1 696.2,429.6 655.0,427.8 618.4,428.1 610.0,425.3 540.6,422.9 533.1,420.2 486.2,421.2 437.5,421.0 420.6,420.1 381.2,425.3 355.0,428.3 317.5,429.4 308.1,430.0 299.7,434.1 291.2,433.4 282.8,409.4 274.4,412.2 265.0,423.4 256.6,429.1 250.0,430.4 170.3,430.4 161.9,432.4 109.4,432.4 101.9,430.9 92.5,430.4"/>
<g stroke="rgba(40,50,20,0.05)" stroke-width="1" shape-rendering="crispEdges">
<line x1="106.6" y1="383" x2="106.6" y2="468"/>
<line x1="175.5" y1="383" x2="175.5" y2="468"/>
<line x1="244.4" y1="383" x2="244.4" y2="468"/>
<line x1="313.3" y1="383" x2="313.3" y2="468"/>
<line x1="382.2" y1="383" x2="382.2" y2="468"/>
<line x1="451.1" y1="383" x2="451.1" y2="468"/>
<line x1="520.1" y1="383" x2="520.1" y2="468"/>
<line x1="589.0" y1="383" x2="589.0" y2="468"/>
<line x1="657.9" y1="383" x2="657.9" y2="468"/>
<line x1="726.8" y1="383" x2="726.8" y2="468"/>
<line x1="795.7" y1="383" x2="795.7" y2="468"/>
<line x1="864.6" y1="383" x2="864.6" y2="468"/>
<line x1="933.5" y1="383" x2="933.5" y2="468"/>
<line x1="1002.4" y1="383" x2="1002.4" y2="468"/>
<line x1="1071.3" y1="383" x2="1071.3" y2="468"/>
<line x1="1140.2" y1="383" x2="1140.2" y2="468"/>
<line x1="1209.2" y1="383" x2="1209.2" y2="468"/>
<line x1="1278.1" y1="383" x2="1278.1" y2="468"/>
<line x1="1347.0" y1="383" x2="1347.0" y2="468"/>
<line x1="1415.9" y1="383" x2="1415.9" y2="468"/>
<line x1="1484.8" y1="383" x2="1484.8" y2="468"/>
<line x1="92.5" y1="383.5" x2="1539" y2="383.5"/>
<line x1="92.5" y1="404.5" x2="1539" y2="404.5"/>
<line x1="92.5" y1="425.5" x2="1539" y2="425.5"/>
<line x1="92.5" y1="446.5" x2="1539" y2="446.5"/>
<line x1="92.5" y1="467.5" x2="1539" y2="467.5"/>
</g>
<polyline fill="none" stroke="#7eb26d" stroke-width="1" points="92.5,446.3 109.4,447.2 161.9,447.2 170.3,446.3 250.0,446.3 256.6,445.6 265.0,442.2 274.4,436.6 282.8,435.2 291.2,447.4 299.7,448.2 308.1,446.3 355.0,445.4 381.2,443.7 420.6,440.9 533.1,440.9 540.6,442.2 610.0,443.1 618.4,445.0 655.0,444.6 696.2,445.6 704.7,445.4 713.1,448.2 722.5,443.1 731.0,434.7 739.4,430.4 747.8,430.9 765.6,438.1 782.5,438.4 791.0,440.3 801.2,439.4 827.5,439.8 868.8,442.2 877.2,442.2 895.0,434.1 917.5,431.3 955.0,430.9 1001.9,431.3 1041.2,432.8 1058.1,432.2 1123.8,433.8 1153.8,434.3 1255.0,434.3 1363.8,434.4 1400.0,433.4 1436.2,432.9 1454.4,429.3 1479.8,430.4 1497.9,432.9 1531.4,433.4"/>
<polyline fill="none" stroke="#eab839" stroke-width="1" points="92.5,430.4 101.9,430.9 109.4,432.4 161.9,432.4 170.3,430.4 250.0,430.4 256.6,429.1 265.0,423.4 274.4,412.2 282.8,409.4 291.2,433.4 299.7,434.1 308.1,430.0 317.5,429.4 355.0,428.3 381.2,425.3 420.6,420.1 437.5,421.0 486.2,421.2 533.1,420.2 540.6,422.9 610.0,425.3 618.4,428.1 655.0,427.8 696.2,429.6 704.7,429.1 713.1,431.5 722.5,422.5 731.0,405.6 739.4,398.5 747.8,399.4 765.6,414.1 774.1,414.4 782.5,413.7 791.0,417.8 801.2,415.6 827.5,416.3 868.8,421.9 877.2,421.2 895.0,406.0 917.5,400.9 955.0,400.6 1001.9,401.3 1041.2,404.1 1058.1,403.2 1123.8,406.0 1153.8,407.1 1255.0,407.5 1363.8,407.5 1400.0,405.3 1436.2,404.1 1454.4,398.5 1479.8,399.4 1497.9,404.4 1508.8,405.3 1531.4,405.3"/>
<polyline fill="none" stroke="#6ed0e0" stroke-width="1" points="92.5,424.8 101.9,425.3 109.4,426.6 161.9,426.6 170.3,424.8 250.0,424.9 256.6,423.4 265.0,417.8 274.4,405.6 282.8,403.4 291.2,427.6 299.7,428.7 308.1,424.8 317.5,423.8 355.0,422.1 381.2,419.7 420.6,414.4 437.5,415.0 486.2,415.4 533.1,414.4 540.6,416.5 610.0,419.1 618.4,421.9 655.0,421.6 696.2,423.4 704.7,422.9 713.1,428.1 722.5,419.1 731.0,400.9 739.4,393.1 747.8,394.0 765.6,409.0 774.1,409.4 782.5,408.8 791.0,412.6 801.2,410.3 808.8,410.3 827.5,411.2 868.8,416.9 877.2,416.3 895.0,399.6 917.5,394.4 955.0,394.0 1001.9,394.4 1041.2,397.6 1058.1,396.2 1123.8,399.1 1153.8,400.4 1255.0,400.4 1363.8,400.4 1400.0,398.5 1436.2,397.6 1454.4,391.4 1479.8,392.7 1497.9,397.7 1508.8,398.5 1531.4,398.5"/>
<g fill="#24262b" font-size="9.3">
<text x="89" y="384.8" text-anchor="end">80 GB</text>
<text x="89" y="406.0" text-anchor="end">60 GB</text>
<text x="89" y="427.1" text-anchor="end">40 GB</text>
<text x="89" y="448.3" text-anchor="end">20 GB</text>
<text x="89" y="469.8" text-anchor="end">0 MB</text>
<text x="106.6" y="480.5" text-anchor="middle">08/15 16:00</text>
<text x="175.5" y="480.5" text-anchor="middle">08/16 00:00</text>
<text x="244.4" y="480.5" text-anchor="middle">08/16 08:00</text>
<text x="313.3" y="480.5" text-anchor="middle">08/16 16:00</text>
<text x="382.2" y="480.5" text-anchor="middle">08/17 00:00</text>
<text x="451.1" y="480.5" text-anchor="middle">08/17 08:00</text>
<text x="520.1" y="480.5" text-anchor="middle">08/17 16:00</text>
<text x="589.0" y="480.5" text-anchor="middle">08/18 00:00</text>
<text x="657.9" y="480.5" text-anchor="middle">08/18 08:00</text>
<text x="726.8" y="480.5" text-anchor="middle">08/18 16:00</text>
<text x="795.7" y="480.5" text-anchor="middle">08/19 00:00</text>
<text x="864.6" y="480.5" text-anchor="middle">08/19 08:00</text>
<text x="933.5" y="480.5" text-anchor="middle">08/19 16:00</text>
<text x="1002.4" y="480.5" text-anchor="middle">08/20 00:00</text>
<text x="1071.3" y="480.5" text-anchor="middle">08/20 08:00</text>
<text x="1140.2" y="480.5" text-anchor="middle">08/20 16:00</text>
<text x="1209.2" y="480.5" text-anchor="middle">08/21 00:00</text>
<text x="1278.1" y="480.5" text-anchor="middle">08/21 08:00</text>
<text x="1347.0" y="480.5" text-anchor="middle">08/21 16:00</text>
<text x="1415.9" y="480.5" text-anchor="middle">08/22 00:00</text>
<text x="1484.8" y="480.5" text-anchor="middle">08/22 08:00</text>
</g>


<rect x="92" y="571" width="1440" height="68" fill="#f5f5f5"/>
<g stroke="rgba(40,50,20,0.05)" stroke-width="1" shape-rendering="crispEdges">
<line x1="105.4" y1="554" x2="105.4" y2="639"/>
<line x1="174.4" y1="554" x2="174.4" y2="639"/>
<line x1="243.3" y1="554" x2="243.3" y2="639"/>
<line x1="312.3" y1="554" x2="312.3" y2="639"/>
<line x1="381.3" y1="554" x2="381.3" y2="639"/>
<line x1="450.2" y1="554" x2="450.2" y2="639"/>
<line x1="519.2" y1="554" x2="519.2" y2="639"/>
<line x1="588.2" y1="554" x2="588.2" y2="639"/>
<line x1="657.2" y1="554" x2="657.2" y2="639"/>
<line x1="726.1" y1="554" x2="726.1" y2="639"/>
<line x1="795.1" y1="554" x2="795.1" y2="639"/>
<line x1="864.1" y1="554" x2="864.1" y2="639"/>
<line x1="933.0" y1="554" x2="933.0" y2="639"/>
<line x1="1002.0" y1="554" x2="1002.0" y2="639"/>
<line x1="1071.0" y1="554" x2="1071.0" y2="639"/>
<line x1="1140.0" y1="554" x2="1140.0" y2="639"/>
<line x1="1208.9" y1="554" x2="1208.9" y2="639"/>
<line x1="1277.9" y1="554" x2="1277.9" y2="639"/>
<line x1="1346.9" y1="554" x2="1346.9" y2="639"/>
<line x1="1415.8" y1="554" x2="1415.8" y2="639"/>
<line x1="1484.8" y1="554" x2="1484.8" y2="639"/>
<line x1="92" y1="554.5" x2="1539" y2="554.5"/>
<line x1="92" y1="575.5" x2="1539" y2="575.5"/>
<line x1="92" y1="596.5" x2="1539" y2="596.5"/>
<line x1="92" y1="617.5" x2="1539" y2="617.5"/>
<line x1="92" y1="638.5" x2="1539" y2="638.5"/>
</g>
<line x1="92" y1="571" x2="1532" y2="571" stroke="#9fca90" stroke-width="1.2"/>
<g fill="#24262b" font-size="9.3">
<text x="88" y="555.8" text-anchor="end">200 K</text>
<text x="88" y="577.2" text-anchor="end">150 K</text>
<text x="88" y="598.4" text-anchor="end">100 K</text>
<text x="88" y="619.4" text-anchor="end">50 K</text>
<text x="88" y="640.8" text-anchor="end">0</text>
<text x="105.4" y="651.5" text-anchor="middle">08/15 16:00</text>
<text x="174.4" y="651.5" text-anchor="middle">08/16 00:00</text>
<text x="243.3" y="651.5" text-anchor="middle">08/16 08:00</text>
<text x="312.3" y="651.5" text-anchor="middle">08/16 16:00</text>
<text x="381.3" y="651.5" text-anchor="middle">08/17 00:00</text>
<text x="450.2" y="651.5" text-anchor="middle">08/17 08:00</text>
<text x="519.2" y="651.5" text-anchor="middle">08/17 16:00</text>
<text x="588.2" y="651.5" text-anchor="middle">08/18 00:00</text>
<text x="657.2" y="651.5" text-anchor="middle">08/18 08:00</text>
<text x="726.1" y="651.5" text-anchor="middle">08/18 16:00</text>
<text x="795.1" y="651.5" text-anchor="middle">08/19 00:00</text>
<text x="864.1" y="651.5" text-anchor="middle">08/19 08:00</text>
<text x="933.0" y="651.5" text-anchor="middle">08/19 16:00</text>
<text x="1002.0" y="651.5" text-anchor="middle">08/20 00:00</text>
<text x="1071.0" y="651.5" text-anchor="middle">08/20 08:00</text>
<text x="1140.0" y="651.5" text-anchor="middle">08/20 16:00</text>
<text x="1208.9" y="651.5" text-anchor="middle">08/21 00:00</text>
<text x="1277.9" y="651.5" text-anchor="middle">08/21 08:00</text>
<text x="1346.9" y="651.5" text-anchor="middle">08/21 16:00</text>
<text x="1415.8" y="651.5" text-anchor="middle">08/22 00:00</text>
<text x="1484.8" y="651.5" text-anchor="middle">08/22 08:00</text>
</g>

</svg>

<!-- legends -->
<div class="sw" style="left:72px;top:325px;background:#7eb26d"></div><div class="lg" style="left:88px;top:321px">Used</div>
<div class="sw" style="left:116px;top:325px;background:#eab839"></div><div class="lg" style="left:132px;top:321px">Cached</div>
<div class="sw" style="left:171px;top:325px;background:#6ed0e0"></div><div class="lg" style="left:188px;top:321px">Buffers</div>
<div class="sw" style="left:225px;top:325px;background:#ef843c"></div><div class="lg" style="left:241px;top:321px">Free</div>

<div class="sw" style="left:72px;top:496px;background:#7eb26d"></div><div class="lg" style="left:88px;top:492px">slab</div>
<div class="sw" style="left:113px;top:496px;background:#eab839"></div><div class="lg" style="left:129px;top:492px">rec</div>
<div class="sw" style="left:150px;top:496px;background:#6ed0e0"></div><div class="lg" style="left:166px;top:492px">unrec</div>

<div class="sw" style="left:72px;top:667px;background:#7eb26d"></div><div class="lg" style="left:88px;top:663px">inodes&nbsp; Min: 159 K&nbsp; Max: 159 K</div>

<!-- crosshair + tooltip -->
<svg class="a" style="left:572px;top:192px" width="14" height="45"><circle cx="7" cy="7.2" r="2.6" fill="rgba(126,178,109,0.45)" stroke="rgba(150,160,120,0.6)" stroke-width="0.8"/><circle cx="7" cy="37.5" r="2.6" fill="rgba(126,178,109,0.35)" stroke="rgba(126,178,109,0.6)" stroke-width="0.8"/></svg>
<div class="a" style="left:582px;top:183px;width:1px;height:114px;background:#d44a3a"></div>
<div class="a" style="left:590px;top:246px;width:105px;height:76px;background:#ececec;border-radius:3px"></div>
<div class="a" style="left:599px;top:253px;font-size:9.3px;color:#202226;white-space:nowrap">2021-08-17 22:30:00</div>
<div class="sw" style="left:599px;top:271px;width:7px;height:2px;background:#7eb26d"></div>
<div class="a" style="left:609px;top:268px;font-size:9.3px;color:#202226;-webkit-text-stroke:0.3px #202226;white-space:nowrap">Used:</div>
<div class="a" style="left:600px;top:268px;width:88px;text-align:right;font-size:9.3px;color:#202226;-webkit-text-stroke:0.3px #202226;white-space:nowrap">88.7 GB</div>
<div class="sw" style="left:599px;top:283px;width:7px;height:2px;background:#eab839"></div>
<div class="a" style="left:609px;top:280px;font-size:9.3px;color:#202226;white-space:nowrap">Cached:</div>
<div class="a" style="left:600px;top:280px;width:88px;text-align:right;font-size:9.3px;color:#202226;white-space:nowrap">38.3 GB</div>
<div class="sw" style="left:599px;top:295px;width:7px;height:2px;background:#6ed0e0"></div>
<div class="a" style="left:609px;top:292px;font-size:9.3px;color:#202226;white-space:nowrap">Buffers:</div>
<div class="a" style="left:600px;top:292px;width:88px;text-align:right;font-size:9.3px;color:#202226;white-space:nowrap">777 MB</div>
<div class="sw" style="left:599px;top:307px;width:7px;height:2px;background:#ef843c"></div>
<div class="a" style="left:609px;top:304px;font-size:9.3px;color:#202226;white-space:nowrap">Free:</div>
<div class="a" style="left:600px;top:304px;width:88px;text-align:right;font-size:9.3px;color:#202226;white-space:nowrap">1.10 GB</div>
<!-- cursor -->
<svg class="a" style="left:568px;top:224px" width="32" height="36" viewBox="0 0 32 36">
  <path d="M3,15 h24" stroke="#000" stroke-width="1" stroke-dasharray="1.5,1"/>
  <path d="M14.5,2 v13" stroke="#000" stroke-width="1" stroke-dasharray="1.5,1"/>
  <path d="M14.5,14 L14.5,30 L18,26.8 L20.8,33 L23.2,32 L20.6,25.8 L25.6,25.8 Z" fill="#484848" stroke="#fff" stroke-width="1"/>
</svg>
<!-- scrollbar -->
<div id="sbar" class="a"></div>
<svg class="a" style="left:1587px;top:77px" width="9" height="6"><path d="M0.5,5.5 L4.5,1 L8.5,5.5 Z" fill="#505050"/></svg>
<div id="thumb" class="a"></div>
<svg class="a" style="left:1587px;top:849px" width="9" height="6"><path d="M0.5,0.5 L4.5,5 L8.5,0.5 Z" fill="#a3a3a3"/></svg>

<!-- ============ taskbar ============ -->
<div id="taskbar" class="a"></div>
<div class="a" style="left:175px;top:861px;width:60px;height:39px;background:#7ad4f2;border-left:1px solid #3f7f99;border-right:1px solid #3f7f99"></div>
<div class="a" style="left:299px;top:861px;width:60px;height:39px;background:#96dcf6;border-left:1px solid #3f7f99;border-right:1px solid #3f7f99"></div>
<!-- windows logo -->
<svg class="a" style="left:11px;top:866px" width="28" height="28" viewBox="0 0 28 28"><path d="M0.5,4 L11.5,2.5 V13 H0.5 Z M13,2.3 L27.5,0.3 V13 H13 Z M0.5,14.5 H11.5 V25 L0.5,23.5 Z M13,14.5 H27.5 V27.3 L13,25.3 Z" fill="#fff"/></svg>
<!-- server manager -->
<svg class="a" style="left:64px;top:863px" width="34" height="34" viewBox="0 0 34 34"><rect x="1.5" y="1.5" width="15" height="28" fill="#228ae0" stroke="#fff" stroke-width="1.1"/><path d="M1.5,8.8 H16.5" stroke="#fff" stroke-width="1.1"/><rect x="15.5" y="16.8" width="7.5" height="3" rx="1" fill="#6f8fa6" stroke="#fff" stroke-width="1"/><rect x="6.5" y="19.5" width="26" height="13" rx="1.5" fill="#6f8fa6" stroke="#fff" stroke-width="1.2"/><path d="M8.5,22.8 H30.5" stroke="#fff" stroke-width="1"/><circle cx="11" cy="22.8" r="1" fill="#fff"/><circle cx="28" cy="22.8" r="1" fill="#fff"/></svg>
<!-- powershell -->
<svg class="a" style="left:129px;top:868px" width="29" height="24" viewBox="0 0 29 24"><defs><linearGradient id="psg" x1="0" y1="0" x2="1" y2="1"><stop offset="0" stop-color="#7fb8e6"/><stop offset="0.45" stop-color="#2f7cc6"/><stop offset="1" stop-color="#1c5aa8"/></linearGradient></defs><path d="M6,1.2 H27.5 Q28.3,1.2 28,2.2 L23.5,21.8 Q23.2,22.6 22.4,22.6 H1.5 Q0.8,22.6 1,21.8 L5,2 Q5.2,1.2 6,1.2 Z" fill="url(#psg)" stroke="#1b4f8c" stroke-width="0.8"/><path d="M10,4.5 L19,11.5 L9,18.5" fill="none" stroke="#fff" stroke-width="2.2"/><path d="M15.5,17.8 H21" stroke="#cfe3f5" stroke-width="1.6"/></svg>
<!-- explorer -->
<svg class="a" style="left:180px;top:862px" width="110" height="36" viewBox="0 0 110 36">
 <defs>
  <linearGradient id="fy" x1="0" y1="0" x2="0" y2="1"><stop offset="0" stop-color="#fdf0c0"/><stop offset="1" stop-color="#f1cf69"/></linearGradient>
  <linearGradient id="fb" x1="0" y1="0" x2="1" y2="1"><stop offset="0" stop-color="#dff3fb"/><stop offset="0.5" stop-color="#8ccbef"/><stop offset="1" stop-color="#4f9fd8"/></linearGradient>
 </defs>
 <path d="M10.5,9 V6.3 Q10.5,5.2 11.6,5.2 H24.6 Q25.8,5.2 25.8,6.3 V9 Z" fill="#f3d98e" stroke="#d3a75c" stroke-width="0.8"/>
 <path d="M19.9,11 V8.6 Q19.9,7.6 21,7.6 H38.4 Q39.5,7.6 39.5,8.6 V11 Z" fill="#f3d98e" stroke="#d3a75c" stroke-width="0.8"/>
 <rect x="13" y="6.2" width="8" height="1.7" fill="#fff"/><rect x="13" y="6.2" width="2.8" height="1.7" fill="#14b43c"/>
 <rect x="21" y="8.2" width="10" height="1.5" fill="#fff"/><rect x="21" y="8.2" width="2.7" height="1.5" fill="#e02d2d"/>
 <path d="M9.3,13 Q9.3,11.6 10.7,11.6 H25.8 L27.3,9.6 H39.3 Q40.6,9.6 40.6,11 V30.3 Q40.6,31.6 39.3,31.6 H10.6 Q9.3,31.6 9.3,30.3 Z" fill="url(#fy)" stroke="#d1a45a" stroke-width="0.9"/>
 <rect x="29.2" y="10.3" width="9" height="1.4" fill="#fff"/><rect x="29.2" y="10.3" width="2.8" height="1.4" fill="#1e8fe6"/>
 <path d="M13.2,33.5 V23.2 Q13.2,21.2 15.2,21.2 H34.8 Q36.8,21.2 36.8,23.2 V33.5 H30.6 V25.6 H19 V33.5 Z" fill="url(#fb)" stroke="#4d99cf" stroke-width="0.8"/>
 <path d="M16.5,17 V26 M13.5,22 L21,18" stroke="#fff" stroke-width="0.7" opacity="0.8"/>
</svg>
<!-- store -->
<svg class="a" style="left:252px;top:865px" width="30" height="30" viewBox="0 0 30 30"><rect x="0" y="0" width="30" height="30" fill="#008a10"/>
 <path d="M6.8,10.2 V7.8 A4.6,4.6 0 0,1 16,7.8 V9.2 M11.4,4.8 L10.2,9.6 M17.4,5.8 L18.6,9" fill="none" stroke="#fff" stroke-width="1.1"/>
 <path d="M4,10.4 L25,8 V26.5 L20.5,29 L4,24.4 Z" fill="#fff"/>
 <path d="M7.2,12.6 L12,12 V17 H7.2 Z M13,11.9 L17.8,11.3 V17 H13 Z M7.2,18 H12 V23.4 L7.2,22.7 Z M13,18 H17.8 V24.3 L13,23.6 Z" fill="#008a10"/>
</svg>
<!-- chrome -->
<svg class="a" style="left:313px;top:864px" width="32" height="32" viewBox="0 0 32 32">
  <path d="M16,16 L3,8.5 A15,15 0 0,1 29,8.5 Z" fill="#db4437"/>
  <path d="M16,16 L29,8.5 A15,15 0 0,1 16,31 Z" fill="#fcc934"/>
  <path d="M16,16 L16,31 A15,15 0 0,1 3,8.5 Z" fill="#0f9d58"/>
  <circle cx="16" cy="16" r="6.6" fill="#fff"/><circle cx="16" cy="16" r="5.2" fill="#4285f4"/>
</svg>
<!-- tray -->
<svg class="a" style="left:1405px;top:866px" width="72" height="26" viewBox="0 0 72 26">
 <g stroke="#1d4f5e" stroke-width="1" stroke-linejoin="round">
  <rect x="6.2" y="6" width="2.4" height="15.8" rx="1" fill="#fff"/>
  <path d="M8.6,7 H13.5 Q14.5,7.5 14.5,9.6 L21.3,10 L20.5,14 H8.6 Z" fill="#fff"/>
  <circle cx="17.1" cy="17" r="4.6" fill="#e0242e"/>
  <path d="M15.2,15.1 L19,18.9 M19,15.1 L15.2,18.9" stroke="#fff" stroke-width="1.4"/>
  <circle cx="33.5" cy="9.8" r="2.4" fill="none" stroke="#1d4f5e" stroke-width="2.6"/>
  <circle cx="33.5" cy="9.8" r="2.4" fill="none" stroke="#fff" stroke-width="1.2"/>
  <path d="M33.5,12.5 V20" stroke="#1d4f5e" stroke-width="2.6"/><path d="M33.5,12.5 V20" stroke="#fff" stroke-width="1.2"/>
  <path d="M37,7.6 H44.6 V18.5 M36.5,16.8 H38.5" fill="none" stroke="#1d4f5e" stroke-width="2.6"/>
  <path d="M37,7.6 H44.6 V18.5 M36.5,16.8 H38.5" fill="none" stroke="#fff" stroke-width="1.2"/>
  <path d="M41.3,12.8 L46,21.6 H36.6 Z" fill="#f5c211" stroke="none"/>
  <path d="M41.3,15.5 V19 M41.3,20 V20.6" stroke="#222" stroke-width="1.1"/>
  <path d="M54.6,10.8 H57.4 L61,6.8 V21.5 L57.4,17.6 H54.6 Z" fill="#fff"/>
  <circle cx="64.9" cy="16.9" r="4.6" fill="#e0242e"/>
  <path d="M63,15 L66.8,18.8 M66.8,15 L63,18.8" stroke="#fff" stroke-width="1.4"/>
 </g>
</svg>
<div class="a" style="left:1489px;top:874px;font-size:11.2px;color:#000;white-space:nowrap;letter-spacing:-0.5px">ENG</div>
<div class="a" style="left:1528px;top:864px;font-size:12.4px;color:#000;white-space:nowrap;letter-spacing:-0.85px">02:23</div>
<svg class="a" style="left:1524px;top:862px" width="62" height="34" viewBox="0 0 62 34"><g fill="none" stroke="#000" stroke-width="1.2">
<path d="M36.4,5 V13.2 M34.1,13.2 H42.1 M36.8,13.2 Q39.5,7.5 42.1,12.5"/>
<path d="M48.1,9.3 Q48,13.2 50,13.2 H55.5 Q57,13.2 57,9.3"/>
<path d="M5,23.4 H9.7 M6.3,23.4 V30.8"/>
<path d="M15.3,23.4 H19.8 M16.5,23.4 V30.8"/>
<path d="M22.6,23.4 L22.8,30.8"/>
<path d="M24.2,31.8 L28.7,22.1"/>
<path d="M34.5,30.8 L37.2,23.3 L40.3,30.8"/>
<path d="M41.1,31.8 L45.7,22.1"/>
<path d="M46.1,23.4 H50.3 M47.5,23.4 V30.8"/>
<path d="M51.9,23.4 H56.9 M53.5,23.4 V30.8"/>
</g><g fill="#000">
<rect x="39" y="6.6" width="1.2" height="1.2"/><rect x="45.8" y="12.3" width="1.3" height="1.3"/><rect x="51.8" y="15" width="1.2" height="1.2"/>
<path d="M12.6,26 L14.2,27.6 L12.6,29.2 L11,27.6 Z"/><path d="M31.5,26 L33.1,27.6 L31.5,29.2 L29.9,27.6 Z"/>
</g></svg>

</body></html>
